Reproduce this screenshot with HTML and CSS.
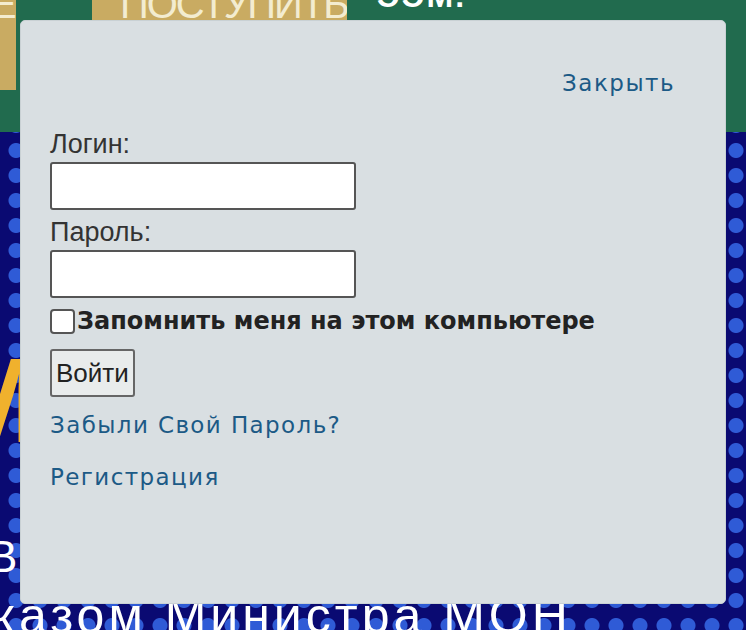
FILE: index.html
```html
<!DOCTYPE html>
<html lang="ru">
<head>
	<meta charset="UTF-8">
	<title>Вход</title>
	<link rel="stylesheet" href="styles.css">
</head>
<body>
	<div class="page">
		<div class="topbar">
			<div class="tab tab_small"><span>Е</span></div>
			<div class="tab tab_apply"><span>ПОСТУПИТЬ</span></div>
			<div class="topnote">ЭЭМ.</div>
		</div>
		<div class="hero">
			<div class="hero_m">М</div>
			<div class="hero_v">В</div>
			<div class="hero_line">казом Министра МОН</div>
		</div>
	</div>

	<div class="modal">
		<div class="modal_head">
			<a href="#" class="link close">Закрыть</a>
		</div>
		<form class="login">
			<label class="label" for="login">Логин:</label>
			<input class="field" type="text" id="login">
			<label class="label" for="pass">Пароль:</label>
			<input class="field" type="password" id="pass">
			<div class="remember">
				<span class="check"></span>
				<span>Запомнить меня на этом компьютере</span>
			</div>
			<button class="btn" type="button">Войти</button>
		</form>
		<div class="links">
			<a href="#" class="link">Забыли Свой Пароль?</a>
			<a href="#" class="link">Регистрация</a>
		</div>
	</div>
</body>
</html>
```

FILE: styles.css
```css
* {
	padding: 0;
	margin: 0;
	box-sizing: border-box;
}
body {
	width: 746px;
	height: 630px;
	overflow: hidden;
	position: relative;
	font-family: "Liberation Sans", Arial, sans-serif;
	background: #0a0a72;
}
.page {
	height: 630px;
	display: flex;
	flex-direction: column;
}
.topbar {
	height: 132px;
	background: #216b4e;
	display: flex;
	align-items: flex-start;
}
.tab {
	height: 90px;
	background: #c9ab62;
	color: #f3ecd0;
	font-size: 40px;
	overflow: hidden;
	line-height: 1;
}
.tab span {
	display: block;
	margin-top: -16px;
}
.tab_small {
	width: 16px;
	text-indent: -10px;
}
.tab_apply {
	width: 255px;
	margin-left: 76px;
	padding-left: 28px;
	letter-spacing: -2px;
}
.topnote {
	margin-left: 30px;
	margin-top: -20px;
	color: #fff;
	font-weight: bold;
	font-size: 32px;
	line-height: 1;
	letter-spacing: 2px;
}
.hero {
	flex: 1;
	background-color: #0a0a72;
	background-image: radial-gradient(circle, #2f5bd6 7px, transparent 8px);
	background-size: 24px 25px;
	background-position: 4px 6px;
	overflow: hidden;
	color: #fff;
	line-height: 1;
}
.hero_m {
	color: #f0b12d;
	font-size: 120px;
	font-weight: bold;
	margin-top: 208px;
	margin-left: -58px;
	height: 100px;
}
.hero_v {
	font-size: 44px;
	margin-top: 95px;
	margin-left: -12px;
}
.hero_line {
	font-size: 50px;
	margin-top: 12px;
	margin-left: -8px;
	letter-spacing: 4px;
	white-space: nowrap;
}
.modal {
	position: absolute;
	left: 20px;
	top: 20px;
	width: 706px;
	height: 584px;
	background: #d9dfe2;
	border: 1px solid #c9d1d4;
	border-radius: 5px;
	padding: 0 50px 0 29px;
	color: #333;
}
.modal_head {
	display: flex;
	justify-content: flex-end;
	padding-top: 46px;
	height: 107px;
}
.link {
	font-family: "DejaVu Sans", "Open Sans", sans-serif;
	font-size: 23px;
	color: #1c5a86;
	text-decoration: none;
	line-height: 32px;
	letter-spacing: 1.4px;
}
.close {
	letter-spacing: 1.5px;
}
.login {
	display: flex;
	flex-direction: column;
	align-items: flex-start;
}
.label {
	font-size: 27px;
	line-height: 32px;
	color: #333;
}
.field {
	width: 306px;
	height: 48px;
	background: #fff;
	border: 2px solid #555;
	border-radius: 3px;
	margin-top: 2px;
	margin-bottom: 6px;
}
.remember {
	display: flex;
	align-items: center;
	font-family: "DejaVu Sans", Verdana, sans-serif;
	font-weight: bold;
	font-size: 24px;
	color: #222;
	height: 34px;
}
.check {
	width: 25px;
	height: 25px;
	background: #fff;
	border: 2px solid #555;
	border-radius: 4px;
	margin-right: 2px;
}
.btn {
	margin-top: 11px;
	height: 48px;
	padding: 0 4px;
	font-family: "Liberation Sans", Arial, sans-serif;
	font-size: 26px;
	color: #222;
	background: #e9ecec;
	border: 2px solid #666;
	border-radius: 3px;
}
.links {
	display: flex;
	flex-direction: column;
	align-items: flex-start;
	gap: 20px;
	margin-top: 12px;
}
```
